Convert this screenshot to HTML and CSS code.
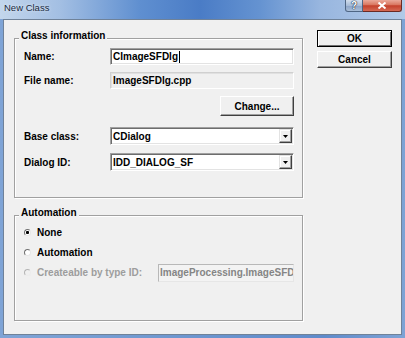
FILE: index.html
```html
<!DOCTYPE html>
<html lang="en">
<head>
    <meta charset="UTF-8">
    <title>New Class</title>
    <link rel="stylesheet" href="styles.css">
</head>
<body>
    <div class="window">
        <div class="titlebar">
            <span class="title">New Class</span>
            <div class="caption-buttons">
                <span class="cap-btn help">?</span>
                <span class="cap-btn close">
                    <svg width="10" height="7" viewBox="0 0 10 7"><path d="M1.5 0.5 L8.5 6.5 M8.5 0.5 L1.5 6.5" stroke="#fff" stroke-width="2"/></svg>
                </span>
            </div>
        </div>
        <div class="client">
            <div class="groups">
                <div class="group class-info">
                    <span class="group-title">Class information</span>
                    <div class="row">
                        <label>Name:</label>
                        <div class="edit"><span>CImageSFDlg</span><span class="caret"></span></div>
                    </div>
                    <div class="row">
                        <label>File name:</label>
                        <div class="edit readonly">ImageSFDlg.cpp</div>
                    </div>
                    <div class="row row-change">
                        <button class="btn change">Change...</button>
                    </div>
                    <div class="row row-base">
                        <label>Base class:</label>
                        <div class="combo">
                            <span>CDialog</span>
                            <span class="drop"><svg width="5" height="3" viewBox="0 0 5 3"><path d="M0 0 H5 L2.5 3 Z" fill="#000"/></svg></span>
                        </div>
                    </div>
                    <div class="row row-id">
                        <label>Dialog ID:</label>
                        <div class="combo">
                            <span>IDD_DIALOG_SF</span>
                            <span class="drop"><svg width="5" height="3" viewBox="0 0 5 3"><path d="M0 0 H5 L2.5 3 Z" fill="#000"/></svg></span>
                        </div>
                    </div>
                </div>
                <div class="group automation">
                    <span class="group-title">Automation</span>
                    <div class="radio-row">
                        <span class="radio checked"></span><span class="radio-label">None</span>
                    </div>
                    <div class="radio-row">
                        <span class="radio"></span><span class="radio-label">Automation</span>
                    </div>
                    <div class="radio-row disabled">
                        <span class="radio"></span><span class="radio-label">Createable by type ID:</span>
                        <div class="edit dim">ImageProcessing.ImageSFD</div>
                    </div>
                </div>
            </div>
            <div class="actions">
                <button class="btn default">OK</button>
                <button class="btn">Cancel</button>
            </div>
        </div>
    </div>
</body>
</html>
```

FILE: styles.css
```css
body {
    margin: 0;
    font-family: "Liberation Sans", Arial, sans-serif;
    font-size: 10px;
    font-weight: bold;
    color: #000;
}
.window {
    width: 405px;
    height: 338px;
    display: flex;
    flex-direction: column;
    background: linear-gradient(90deg, #7fa4d6 0, #6f98d0 40%, #5f8bcb 80%, #7ea3d5 100%);
}
.titlebar {
    height: 19px;
    display: flex;
    justify-content: space-between;
    align-items: flex-start;
    background: linear-gradient(90deg, #c3d6ec 0, #a3bfe3 60px, #5f8fd0 140px, #4a7cc6 200px, #6593d1 260px, #98b6df 320px, #b2cae8 405px);
}
.title {
    font-weight: normal;
    font-size: 9.5px;
    line-height: 12px;
    padding: 2px 0 0 4px;
    color: #1a2a40;
    text-shadow: 0 0 3px #e8f0fa;
}
.caption-buttons {
    display: flex;
    margin-right: 3px;
}
.cap-btn {
    height: 12px;
    box-sizing: border-box;
    display: flex;
    align-items: center;
    justify-content: center;
}
.help {
    width: 18px;
    border: 1px solid #4f6684;
    border-top: none;
    border-radius: 0 0 0 3px;
    background: linear-gradient(#d2deed, #a8bcd7 50%, #8aa2c5 51%, #aabfd9);
    color: #fff;
    font-size: 10px;
    line-height: 10px;
    text-shadow: 0 0 1px #1f2d44, 0 0 1px #1f2d44, 0 0 1px #1f2d44;
}
.close {
    width: 39px;
    border: 1px solid #6b2a23;
    border-top: none;
    border-left: none;
    border-radius: 0 0 3px 0;
    background: linear-gradient(#eaa99a, #d9765f 45%, #c4402b 52%, #d56a54);
}
.client {
    flex: 1;
    margin: 0 3px 3px;
    border: 1px solid #6f8299;
    background: #f0f0f0;
    display: flex;
}
.groups {
    padding: 18px 0 0 10px;
}
.group {
    position: relative;
    width: 289px;
    box-sizing: border-box;
    border: 1px solid #a0a0a0;
    box-shadow: inset 1px 1px 0 #fff, 1px 1px 0 #fff;
}
.group-title {
    position: absolute;
    top: -9px;
    left: 4px;
    padding: 0 2px;
    line-height: 12px;
    background: #f0f0f0;
}
.class-info {
    padding: 9px 8px 26px 9px;
}
.row {
    display: flex;
    align-items: center;
    margin-top: 7px;
}
.row:first-of-type {
    margin-top: 0;
}
.row-change {
    justify-content: flex-end;
}
.row-base {
    margin-top: 11px;
}
.row-id {
    margin-top: 8px;
}
label {
    width: 86px;
}
.edit {
    width: 184px;
    height: 17px;
    box-sizing: border-box;
    display: flex;
    align-items: center;
    padding-left: 2px;
    background: #fff;
    border: 1px solid;
    border-color: #a0a0a0 #fff #fff #a0a0a0;
    box-shadow: inset 1px 1px 0 #6d6d6d, inset -1px -1px 0 #e3e3e3;
    white-space: nowrap;
    overflow: hidden;
}
.caret {
    width: 1px;
    height: 12px;
    margin-left: 1px;
    background: #000;
}
.readonly {
    background: #f0f0f0;
    border-color: #d0d0d0 #fff #fff #d0d0d0;
    box-shadow: inset 1px 1px 0 #e0e0e0;
}
.combo {
    width: 184px;
    height: 18px;
    box-sizing: border-box;
    display: flex;
    align-items: center;
    justify-content: space-between;
    padding: 0 1px 0 2px;
    background: #fff;
    border: 1px solid;
    border-color: #a0a0a0 #fff #fff #a0a0a0;
    box-shadow: inset 1px 1px 0 #6d6d6d, inset -1px -1px 0 #e3e3e3;
}
.drop {
    width: 13px;
    height: 14px;
    box-sizing: border-box;
    display: flex;
    align-items: center;
    justify-content: center;
    background: #f0f0f0;
    border: 1px solid;
    border-color: #e3e3e3 #404040 #404040 #e3e3e3;
    box-shadow: inset -1px -1px 0 #a0a0a0, inset 1px 1px 0 #fff;
}
.btn {
    width: 75px;
    height: 17px;
    padding: 0;
    font: inherit;
    color: #000;
    background: #f0f0f0;
    border: 1px solid;
    border-color: #fff #404040 #404040 #fff;
    box-shadow: inset -1px -1px 0 #a0a0a0;
}
.change {
    width: 74px;
    height: 20px;
}
.default {
    border-color: #000;
    box-shadow: inset 1px 1px 0 #fff, inset -1px -1px 0 #707070;
}
.actions {
    display: flex;
    flex-direction: column;
    gap: 4px;
    padding-top: 10px;
    margin-left: 14px;
}
.automation {
    margin-top: 17px;
    padding: 6px 8px 37px 9px;
}
.radio-row {
    display: flex;
    align-items: center;
    height: 20px;
}
.radio-row.disabled {
    height: 21px;
    color: #9d9d9d;
}
.radio {
    width: 7px;
    height: 7px;
    box-sizing: border-box;
    border: 1px solid;
    border-color: #707070 #e6e6e6 #e6e6e6 #707070;
    border-radius: 50%;
    background: #fff;
}
.radio.checked {
    background: radial-gradient(circle, #000 0 1.3px, #fff 1.8px);
}
.disabled .radio {
    border-color: #b4b4b4 #ececec #ececec #b4b4b4;
    background: #f0f0f0;
}
.radio-label {
    margin-left: 6px;
}
.dim {
    width: 136px;
    height: 18px;
    margin-left: auto;
    padding-left: 1px;
    color: #858585;
    background: #f3f3f3;
    border-color: #b8b8b8 #e6e6e6 #e6e6e6 #b8b8b8;
    box-shadow: none;
}
```
